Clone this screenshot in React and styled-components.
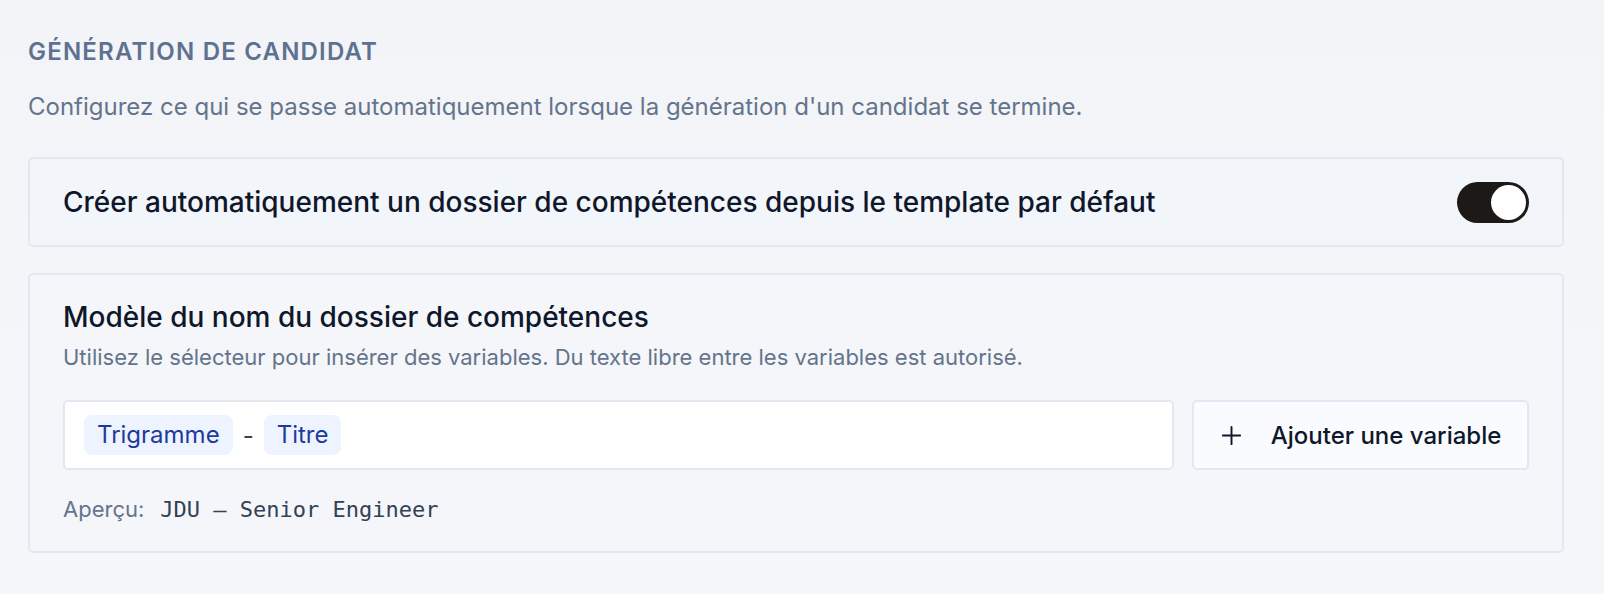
import React from 'react';
import styled, { createGlobalStyle } from 'styled-components';

const GlobalStyle = createGlobalStyle`
  html, body {
    margin: 0;
    padding: 0;
    background: #f3f5f9;
  }
  body {
    font-family: Inter, "Noto Sans", sans-serif;
    -webkit-font-smoothing: antialiased;
  }
`;

function PlusIcon() {
  return (
    <svg width="23" height="23" viewBox="0 0 24 24" fill="none" stroke="currentColor" strokeWidth="2" strokeLinecap="round">
      <path d="M12 3v18M3 12h18" />
    </svg>
  );
}

function App() {
  return (
    <>
      <GlobalStyle />
      <Page>
        <SectionTitle>Génération de candidat</SectionTitle>
        <SectionDesc>
          Configurez ce qui se passe automatiquement lorsque la génération d'un candidat se termine.
        </SectionDesc>

        <ToggleCard>
          <CardLabel>Créer automatiquement un dossier de compétences depuis le template par défaut</CardLabel>
          <Switch $on>
            <Knob />
          </Switch>
        </ToggleCard>

        <TemplateCard>
          <CardLabel>Modèle du nom du dossier de compétences</CardLabel>
          <Hint>Utilisez le sélecteur pour insérer des variables. Du texte libre entre les variables est autorisé.</Hint>
          <EditorRow>
            <TemplateInput>
              <Chip>Trigramme</Chip>
              <Sep>-</Sep>
              <Chip>Titre</Chip>
            </TemplateInput>
            <AddButton>
              <PlusIcon />
              Ajouter une variable
            </AddButton>
          </EditorRow>
          <Preview>
            Aperçu:
            <PreviewValue>JDU — Senior Engineer</PreviewValue>
          </Preview>
        </TemplateCard>
      </Page>
    </>
  );
}

export default App;

const Page = styled.div`
  min-height: 594px;
  box-sizing: border-box;
  padding: 36px 40px 0 28px;
  background: linear-gradient(180deg, #f2f4f8 0%, #f5f7fb 100%);
`;

const SectionTitle = styled.h2`
  margin: 0;
  font-size: 24px;
  font-weight: 600;
  letter-spacing: 0.05em;
  text-transform: uppercase;
  color: #5f7190;
  line-height: 32px;
`;

const SectionDesc = styled.p`
  margin: 23px 0 0;
  font-size: 24px;
  color: #64748b;
  line-height: 32px;
`;

const Card = styled.div`
  border: 2px solid #e3e8f0;
  border-radius: 5px;
  background: #f2f5fa;
  box-sizing: border-box;
`;

const ToggleCard = styled(Card)`
  margin-top: 34px;
  height: 90px;
  padding: 0 33px;
  display: flex;
  align-items: center;
  justify-content: space-between;
`;

const TemplateCard = styled(Card)`
  margin-top: 26px;
  padding: 24px 33px 26px;
  background: #f4f6fa;
`;

const CardLabel = styled.div`
  font-size: 28px;
  font-weight: 500;
  color: #0f172a;
  line-height: 36px;
`;

const Switch = styled.div`
  width: 72px;
  height: 41px;
  border-radius: 21px;
  background: ${p => (p.$on ? '#1c1917' : '#cbd5e1')};
  padding: 3px;
  box-sizing: border-box;
  display: flex;
  justify-content: ${p => (p.$on ? 'flex-end' : 'flex-start')};
  flex-shrink: 0;
`;

const Knob = styled.div`
  width: 35px;
  height: 35px;
  border-radius: 50%;
  background: #fff;
`;

const Hint = styled.div`
  margin-top: 7px;
  font-size: 22px;
  color: #64748b;
  line-height: 30px;
`;

const EditorRow = styled.div`
  margin-top: 28px;
  display: flex;
  gap: 18px;
`;

const TemplateInput = styled.div`
  flex: 1;
  height: 70px;
  box-sizing: border-box;
  background: #fff;
  border: 2px solid #e2e8f0;
  border-radius: 5px;
  padding: 0 19px;
  display: flex;
  align-items: center;
  gap: 10px;
`;

const Chip = styled.span`
  background: #eef4ff;
  color: #1e3a9e;
  font-size: 24px;
  line-height: 40px;
  padding: 0 13px;
  border-radius: 8px;
`;

const Sep = styled.span`
  font-size: 24px;
  color: #334155;
`;

const AddButton = styled.button`
  width: 337px;
  height: 70px;
  box-sizing: border-box;
  background: #f9fbfe;
  border: 2px solid #e1e7f5;
  border-radius: 5px;
  display: flex;
  align-items: center;
  justify-content: center;
  gap: 28px;
  font-family: inherit;
  font-size: 24px;
  font-weight: 500;
  color: #0f172a;
  cursor: pointer;
`;

const Preview = styled.div`
  margin-top: 24px;
  font-size: 22px;
  color: #64748b;
  display: flex;
  align-items: baseline;
  gap: 16px;
  line-height: 30px;
`;

const PreviewValue = styled.span`
  font-family: "DejaVu Sans Mono", "Liberation Mono", monospace;
  font-size: 22px;
  color: #334155;
`;
